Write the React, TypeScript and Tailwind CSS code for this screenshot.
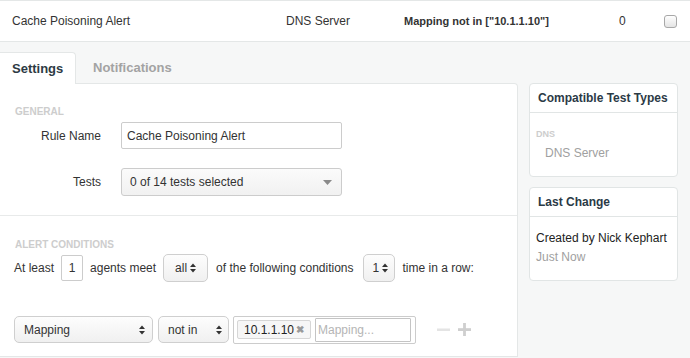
import React from "react";

function UpDown({ className = "" }: { className?: string }) {
  return (
    <svg width="6" height="10" viewBox="0 0 6 10" className={className}>
      <path d="M0 4 L3 0.5 L6 4 Z" fill="#333" />
      <path d="M0 6 L3 9.5 L6 6 Z" fill="#333" />
    </svg>
  );
}

function Spin({ label, className }: { label: string; className: string }) {
  return (
    <div
      className={`flex items-center justify-between rounded-[5px] border border-[#cfcfcf] bg-gradient-to-b from-[#fdfdfd] to-[#f0f0f0] ${className}`}
    >
      <span>{label}</span>
      <UpDown />
    </div>
  );
}

export default function App() {
  return (
    <div className="w-[690px] h-[358px] overflow-hidden bg-[#f6f7f7] font-['Liberation_Sans',Arial,sans-serif] text-[12px] text-[#333]">
      {/* top row */}
      <div className="h-[42px] bg-white border-t border-b border-[#e4e7e7] flex items-center">
        <div className="w-[286px] pl-[12px]">Cache Poisoning Alert</div>
        <div className="w-[118px]">DNS Server</div>
        <div className="w-[215px] font-bold text-[11px]">Mapping not in ["10.1.1.10"]</div>
        <div className="w-[45px]">0</div>
        <div className="w-[13px] h-[13px] rounded-[3px] border border-[#a8a8a8] bg-gradient-to-b from-[#ffffff] to-[#e4e4e4]" />
      </div>

      <div className="flex">
        {/* left */}
        <div className="w-[518px]">
          <div className="h-[41px] pt-[10px] flex items-stretch">
            <div className="relative z-10 -mb-px w-[76px] bg-white border-t border-r border-[#e4e7e7] rounded-tr-[4px] flex items-center pl-[12px] font-bold text-[13px] text-[#2d3a44]">
              Settings
            </div>
            <div className="flex items-center pl-[17px] font-bold text-[13px] text-[#a3a3a3]">
              Notifications
            </div>
          </div>
          <div className="bg-white border-t border-r border-b border-[#e4e7e7] rounded-tr-[4px] h-[274px]">
            {/* general */}
            <div className="pt-[22px] pb-[19px] border-b border-[#e8eaea]">
              <div className="pl-[15px] text-[10px] leading-[12px] font-bold text-[#cdcdcd]">GENERAL</div>
              <div className="mt-[4px] flex items-center">
                <div className="w-[101px] text-right">Rule Name</div>
                <div className="ml-[20px] w-[221px] h-[27px] border border-[#cccccc] rounded-[2px] flex items-center pl-[5px]">
                  Cache Poisoning Alert
                </div>
              </div>
              <div className="mt-[19px] flex items-center">
                <div className="w-[101px] text-right">Tests</div>
                <div className="ml-[20px] w-[221px] h-[28px] border border-[#cccccc] rounded-[3px] bg-gradient-to-b from-[#fbfbfb] to-[#f1f1f1] flex items-center justify-between pl-[8px] pr-[9px]">
                  <span>0 of 14 tests selected</span>
                  <svg width="9" height="5" viewBox="0 0 9 5">
                    <path d="M0 0 L9 0 L4.5 5 Z" fill="#8a8a8a" />
                  </svg>
                </div>
              </div>
            </div>
            {/* alert conditions */}
            <div className="pt-[23px] pl-[14px]">
              <div className="pl-[1px] text-[10px] leading-[12px] font-bold text-[#cdcdcd]">ALERT CONDITIONS</div>
              <div className="mt-[3px] h-[28px] flex items-center">
                <span>At least</span>
                <div className="ml-[7px] w-[22px] h-[26px] border border-[#cccccc] rounded-[2px] flex items-center justify-center">1</div>
                <span className="ml-[7px]">agents meet</span>
                <Spin label="all" className="ml-[7px] w-[45px] h-[28px] pl-[11px] pr-[11px]" />
                <span className="ml-[8px]">of the following conditions</span>
                <Spin label="1" className="ml-[9px] w-[32px] h-[28px] pl-[9px] pr-[6px]" />
                <span className="ml-[8px]">time in a row:</span>
              </div>
              <div className="mt-[34px] h-[27px] flex items-center">
                <Spin label="Mapping" className="w-[139px] h-[27px] pl-[9px] pr-[7px]" />
                <Spin label="not in" className="ml-[5px] w-[71px] h-[27px] pl-[9px] pr-[6px]" />
                <div className="ml-[4px] w-[183px] h-[28px] border border-[#cccccc] rounded-[2px] flex items-center pl-[3px] gap-[4px]">
                  <div className="w-[74px] h-[19px] border border-[#d6d6d6] bg-[#f6f6f6] rounded-[2px] flex items-center justify-between pl-[6px] pr-[6px] text-[#222]">
                    <span>10.1.1.10</span>
                    <span className="text-[10px] font-bold text-[#999]">✖</span>
                  </div>
                  <div className="w-[96px] h-[24px] border border-[#c4c4c4] rounded-[1px] flex items-center pl-[2px] text-[#b5b5b5]">
                    Mapping...
                  </div>
                </div>
                <div className="ml-[21px] flex items-center gap-[8px]">
                  <svg width="13" height="13" viewBox="0 0 13 13">
                    <rect x="0" y="5.5" width="13" height="2.5" fill="#e4e4e4" />
                  </svg>
                  <svg width="13" height="13" viewBox="0 0 13 13">
                    <rect x="0" y="5.2" width="13" height="2.8" fill="#cfcfcf" />
                    <rect x="5.1" y="0" width="2.8" height="13" fill="#cfcfcf" />
                  </svg>
                </div>
              </div>
            </div>
          </div>
        </div>

        {/* right */}
        <div className="ml-[11px] w-[149px] pt-[41px] flex flex-col gap-[10px]">
          <div className="h-[94px] bg-white border border-[#e1e5e5] rounded-[4px]">
            <div className="h-[29px] border-b border-[#e1e5e5] flex items-center pl-[8px] font-bold text-[12px] text-[#2b3a46]">
              Compatible Test Types
            </div>
            <div className="pt-[15px] pl-[6px]">
              <div className="text-[9px] leading-[12px] font-bold text-[#cdcdcd]">DNS</div>
              <div className="mt-[4px] pl-[9px] leading-[18px] text-[#a0a0a0]">DNS Server</div>
            </div>
          </div>
          <div className="h-[94px] bg-white border border-[#e1e5e5] rounded-[4px]">
            <div className="h-[29px] border-b border-[#e1e5e5] flex items-center pl-[8px] font-bold text-[12px] text-[#2b3a46]">
              Last Change
            </div>
            <div className="pt-[12px] pl-[6px] leading-[19px]">
              <div className="text-[#222]">Created by Nick Kephart</div>
              <div className="text-[#a0a0a0]">Just Now</div>
            </div>
          </div>
        </div>
      </div>
    </div>
  );
}
